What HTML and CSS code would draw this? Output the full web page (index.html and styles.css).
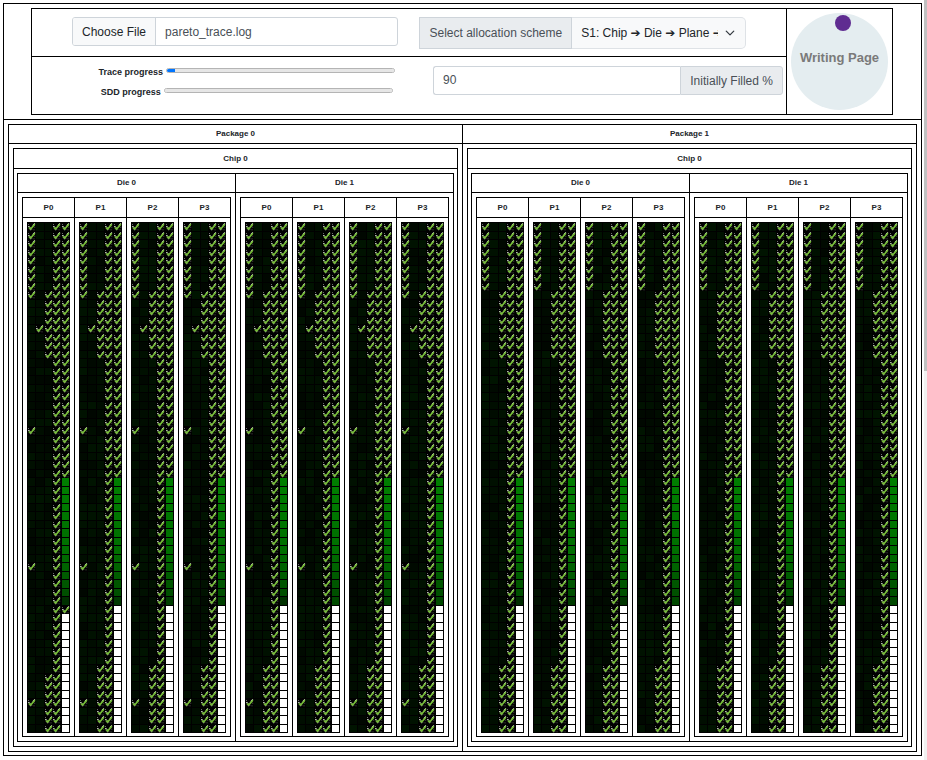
FILE: index.html
```html
<!DOCTYPE html>
<html lang="en">
<head>
<meta charset="utf-8">
<title>SSD simulator</title>
<link rel="stylesheet" href="styles.css">
</head>
<body>
<svg class="symbols" aria-hidden="true">
  <symbol id="tick" viewBox="0 0 8 8" preserveAspectRatio="none">
    <path d="M0 4 L1.4 3.7 L2.6 5 M5 2.4 L7.2 .4 L8 1" fill="none" stroke="#dde6d6" stroke-width="1"/>
    <path d="M.9 4.8 L2.8 6.5 L7.5 1.2" fill="none" stroke="#76bd37" stroke-width="1.7"/>
    <path d="M1.8 7 L3.2 7.9 L4.4 6.6" fill="none" stroke="#b4c8a6" stroke-width=".6"/>
    <path d="M6 7h1v1H6zM7 4h1v1H7zM0 1h1v1H0z" fill="#777"/>
  </symbol>
</svg>
<main class="device">
  <section class="controls">
    <div class="settings">
      <div class="row">
        <div class="cell start">
          <input class="file" id="trace" type="file" aria-label="Trace file">
        </div>
        <div class="cell choice">
          <div class="group scheme">
            <label class="addon" for="scheme">Select allocation scheme</label>
            <select id="scheme">
              <option>S1: Chip ➔ Die ➔ Plane ➔ Package</option>
            </select>
          </div>
        </div>
      </div>
      <div class="row">
        <div class="cell bars">
          <div class="bar"><label for="tp">Trace progress</label><progress id="tp" max="1000" value="35"></progress></div>
          <div class="bar"><label for="sp">SDD progress</label><progress id="sp" max="1000" value="0"></progress></div>
        </div>
        <div class="cell end">
          <div class="group fill">
            <input id="filled" type="text" value="90">
            <label class="addon" for="filled">Initially Filled %</label>
          </div>
        </div>
      </div>
    </div>
    <div class="status">
      <div class="dial">Writing Page<span class="dot"></span></div>
    </div>
  </section>
  <section class="packages" id="packages"></section>
</main>
<div class="rail"><div class="thumb"></div></div>
<script src="device.js"></script>
</body>
</html>
```
FILE: device.js
```js
const ROWS = 60, COLS = 5;
let seed = 11;
function rand() {
  seed = (seed * 1103515245 + 12345) % 2147483648;
  return seed / 2147483648;
}

// State of one page: 'tick', 'used', 'free' or 'idle'
function pageState(pkg, die, plane, row, col) {
  const first = pkg === 0 && die === 0 && plane === 0;
  if (col === 0) {
    if (row < 8) return 'tick';
    return pkg === 0 && [8, 24, 40, 56].includes(row) ? 'tick' : 'idle';
  }
  if (col === 1) return pkg === 0 && row === 12 ? 'tick' : 'idle';
  if (col === 2) {
    if (row >= 8 && row < 16) return 'tick';
    return row >= (first ? 53 : 52) ? 'tick' : 'idle';
  }
  if (col === 3 || row < 30) return 'tick';
  if (row < 45) return 'used';
  return first && row === 45 ? 'tick' : 'free';
}

function matrix(pkg, die, plane) {
  let html = '';
  for (let r = 0; r < ROWS; r++) {
    for (let c = 0; c < COLS; c++) {
      const state = pageState(pkg, die, plane, r, c);
      if (state === 'tick') html += '<i><svg><use href="#tick"/></svg></i>';
      else if (state === 'free') html += '<i class="free"></i>';
      else {
        let g = Math.round(7 + rand() * 13);
        if (state === 'used') {
          g = r < 38 ? 126 - (r - 30) * 2 : 110 - (r - 38) * 6;
          if (r === 44) g = Math.round(40 + rand() * 35);
        }
        html += `<i style="background:rgb(0,${g},0)"></i>`;
      }
    }
  }
  return `<div class="matrix">${html}</div>`;
}

function unit(title, body) {
  return `<div class="unit"><h2>${title}</h2><div class="body">${body}</div></div>`;
}
function list(n, fn) {
  return Array.from({ length: n }, (_, i) => fn(i)).join('');
}

document.getElementById('packages').innerHTML =
  `<div class="box">${list(2, p => unit('Package ' + p,
    `<div class="box chips">${unit('Chip 0',
      `<div class="box dies">${list(2, d => unit('Die ' + d,
        `<div class="box planes">${list(4, n => unit('P' + n, matrix(p, d, n)))}</div>`))}</div>`)}</div>`))}</div>`;

const transfer = new DataTransfer();
transfer.items.add(new File([''], 'pareto_trace.log'));
document.getElementById('trace').files = transfer.files;
```
FILE: styles.css
```css
* { box-sizing: border-box; }
body {
  margin: 0;
  display: flex;
  background: #fff;
  color: #212529;
  font: 12px/18px "Liberation Sans", "DejaVu Sans", sans-serif;
}
.symbols { position: absolute; width: 0; height: 0; }
.device { flex: 1; margin: 3px 2px 4px 3px; border: 1px solid #000; }
.rail { width: 3px; background: #f1f1f1; }
.thumb { height: 371px; background: #c1c1c1; }

.controls { display: flex; margin: 4px 28px 4px 27px; border: 1px solid #000; }
.settings { flex: 1; }
.row { display: grid; grid-template-columns: 49% 51%; height: 47px; }
.row + .row { height: 58px; border-top: 1px solid #000; }
.cell { display: flex; padding-top: 8px; }
.start { padding-left: 40px; }
.choice { padding-left: 18px; }
.end { justify-content: flex-end; padding: 9px 3px 0 0; }

.file {
  width: 326px;
  height: 29px;
  flex: none;
  border: 1px solid #ced4da;
  border-radius: 3px;
  font: inherit;
  line-height: 29px;
  color: #495057;
  background: #fff;
}
.file::file-selector-button {
  height: 27px;
  padding: 0 9px;
  margin: 0 9px 0 0;
  border: 0;
  border-right: 1px solid #ced4da;
  background: #f8f9fa;
  color: #212529;
  font: inherit;
  line-height: 29px;
}

.group { display: flex; }
.addon {
  padding: 0 9px;
  border: 1px solid #ced4da;
  background: #e9ecef;
  color: #495057;
  white-space: nowrap;
}
.scheme { width: 327px; height: 32px; line-height: 30px; }
.scheme select {
  flex: 1;
  min-width: 0;
  appearance: none;
  padding: 0 27px 0 9px;
  border: 1px solid #dee2e6;
  border-left: 0;
  border-radius: 0 5px 5px 0;
  font: inherit;
  color: #212529;
  background: #f8f9fa url("data:image/svg+xml,%3Csvg xmlns='http://www.w3.org/2000/svg' viewBox='0 0 16 16'%3E%3Cpath fill='none' stroke='%23343a40' stroke-linecap='round' stroke-linejoin='round' stroke-width='2' d='M2 5l6 6 6-6'/%3E%3C/svg%3E") no-repeat right 10px center / 10px 10px;
}
.fill { width: 350px; height: 29px; line-height: 29px; }
.fill input {
  flex: 1;
  min-width: 0;
  padding: 0 9px;
  border: 1px solid #ced4da;
  border-right: 0;
  border-radius: 3px 0 0 3px;
  font: inherit;
  color: #495057;
}
.fill .addon { border-radius: 0 3px 3px 0; }

.bars { flex-direction: column; align-items: center; padding: 5px 0 0 60px; }
.bar { display: flex; gap: 3px; height: 20px; font-size: 9px; line-height: 20px; font-weight: bold; }
progress {
  appearance: none;
  width: 229px;
  height: 5px;
  margin-top: 6px;
  border: 1px solid #b4b4b4;
  border-radius: 3px;
  overflow: hidden;
}
progress::-webkit-progress-bar { background: #e6e6e6; }
progress::-webkit-progress-value { background: #0075ff; }

.status { width: 106px; border-left: 1px solid #000; padding: 4px; }
.dial {
  position: relative;
  height: 97px;
  border-radius: 50%;
  background: #e4edf0;
  color: #7a7a7a;
  font-size: 13px;
  line-height: 90px;
  font-weight: bold;
  text-align: center;
  white-space: nowrap;
}
.dot {
  position: absolute;
  top: 2px;
  left: 44px;
  width: 16px;
  height: 16px;
  border-radius: 50%;
  background: #5f2c91;
}

.packages { border-top: 1px solid #000; padding: 4px 4px 3px; }
.box { display: grid; grid-template-columns: repeat(2, 1fr); column-gap: 1px; border: 1px solid #000; }
.chips { grid-template-columns: 1fr; }
.planes { grid-template-columns: repeat(4, 1fr); }
.unit { min-width: 0; }
.unit + .unit { box-shadow: -1px 0 #000; }
h2 {
  margin: 0;
  border-bottom: 1px solid #000;
  font-size: 8px;
  line-height: 18px;
  text-align: center;
}
.chips > .unit > h2, .planes > .unit > h2 { line-height: 19px; }
.dies > .unit > h2 { line-height: 18px; }
.body { padding: 4px; }
.chips > .unit > .body { padding: 4px 3px; }
.dies > .unit > .body { padding: 4px; }
.planes > .unit > .body { padding: 4px 4px 3px; }

.matrix {
  display: grid;
  grid-template: repeat(60, 1fr) / repeat(5, 1fr);
  gap: 1px;
  height: 511px;
  padding: 1px;
  background: #000;
}
.matrix i { min-width: 0; min-height: 0; }
.matrix svg { display: block; width: 100%; height: 100%; overflow: visible; }
.free { background: #fff; }
```
